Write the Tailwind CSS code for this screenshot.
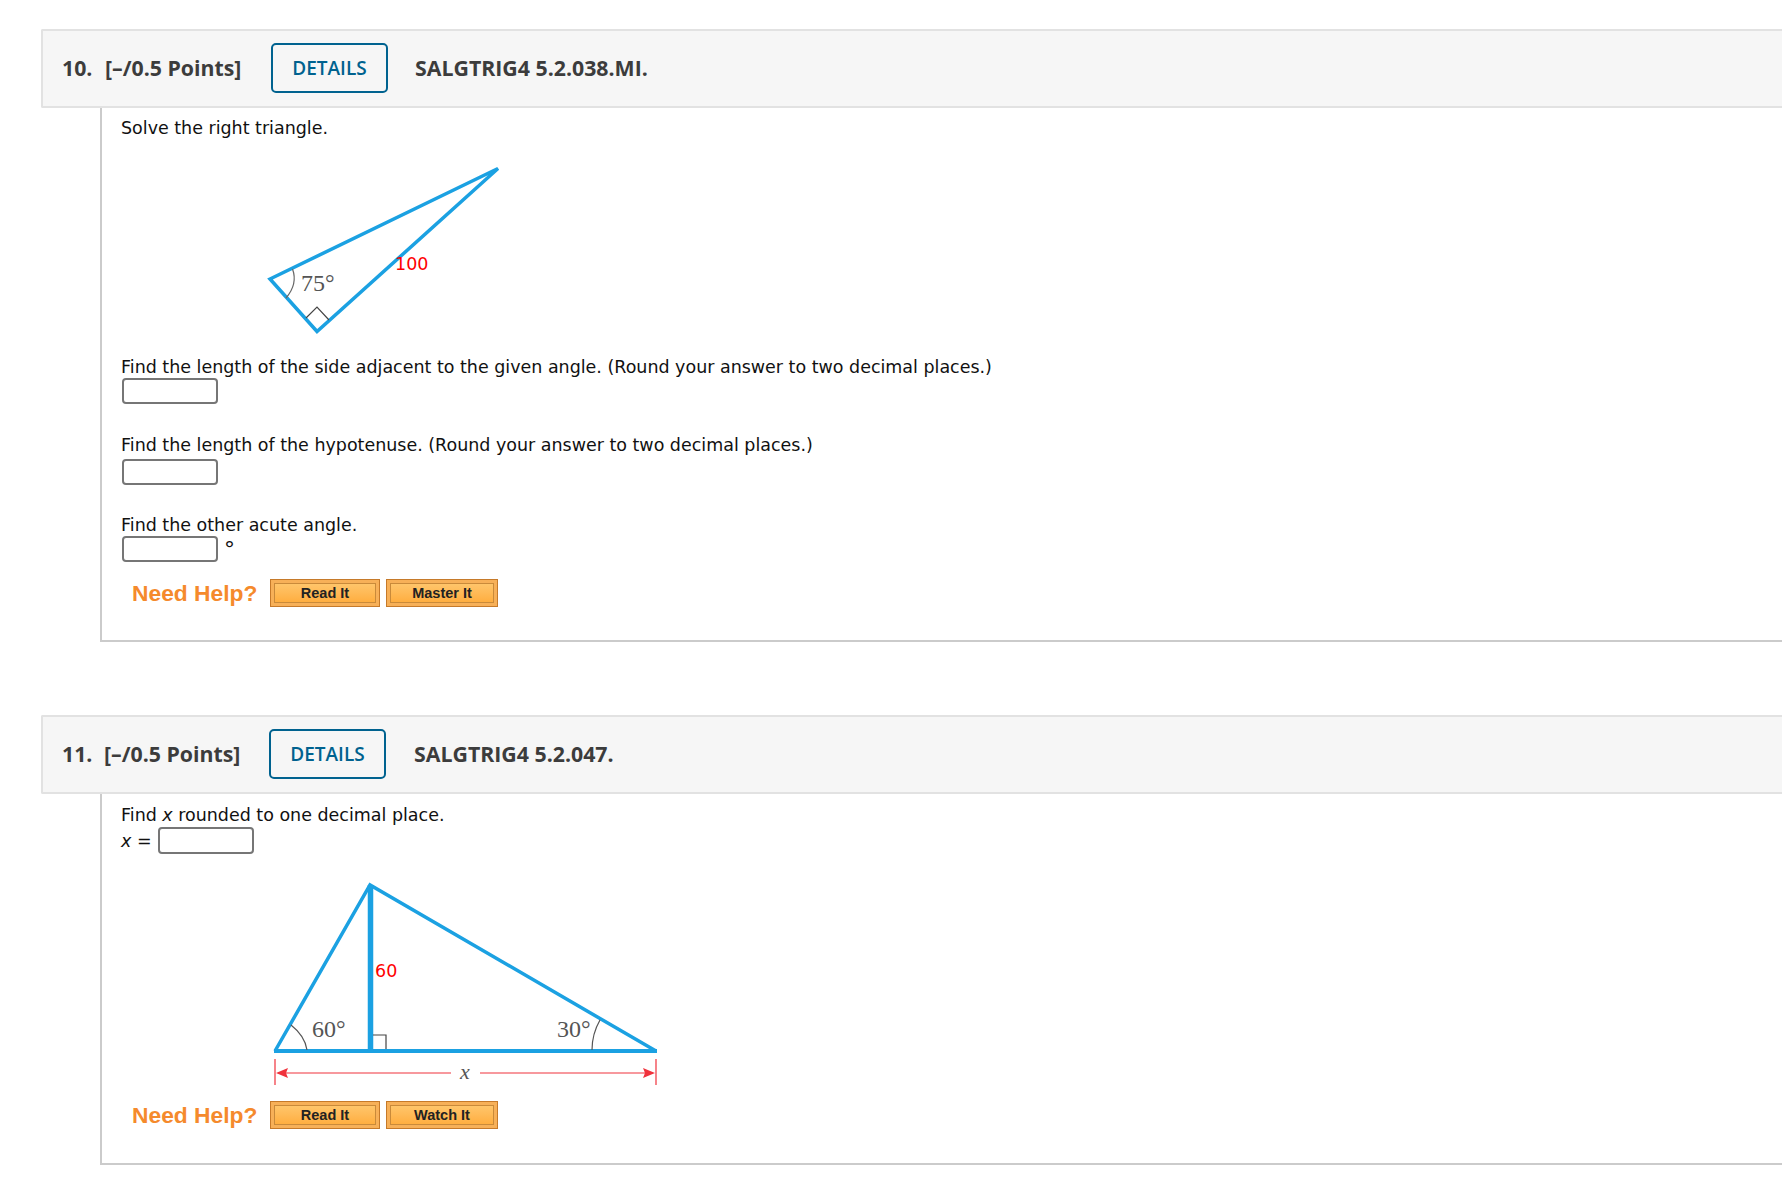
<!DOCTYPE html>
<html lang="en">
<head>
  <meta charset="UTF-8">
  <title>Assignment</title>
  <script src="https://cdn.jsdelivr.net/npm/@tailwindcss/browser@4"></script>
</head>
<body class="bg-white overflow-hidden w-[1782px] h-[1202px] text-[17.48px] leading-[24px] text-[#111] font-['DejaVu_Sans',sans-serif]">

  <!-- question 10 -->
  <section class="pt-[29px]">
    <div class="ml-[41px] h-[79px] flex items-center pl-[19px] pb-[2px] bg-[#f6f6f6] border-2 border-r-0 border-[#e2e2e2] rounded-l-[2px] font-['Open_Sans',sans-serif] font-bold text-[21.3px] text-[#3c3c3c]">
      <span class="w-[25px]">10.</span>
      <span class="ml-[18px] w-[165px]">[–/0.5 Points]</span>
      <a class="ml-[1px] w-[117px] h-[50px] flex items-center justify-center border-2 border-[#00628f] rounded-[5px] font-semibold text-[#00628f] text-[19px]">DETAILS</a>
      <span class="ml-[27px]">SALGTRIG4 5.2.038.MI.</span>
    </div>
    <div class="ml-[100px] h-[534px] border-l-2 border-b-2 border-[#cbcbcb] pl-[19px]">
      <p class="pt-[8px] h-[43px]">Solve the right triangle.</p>
      <svg class="ml-[129px] block" width="270" height="200" viewBox="250 150 270 200" fill="none">
        <path d="M270 278 L498 167.500 L317 330.500 Z" stroke="#1ba1e2" stroke-width="3.500" stroke-linejoin="miter"/>
        <path d="M292.500 268 Q298 283 286 297" stroke="#666" stroke-width="1.200"/>
        <path d="M306 317 L317 306 L329 319" stroke="#444" stroke-width="1.200"/>
        <text x="301" y="290" font-family="Liberation Serif" font-size="24" fill="#555">75°</text>
        <text x="395" y="269" font-family="DejaVu Sans" font-size="17.500" fill="#f00">100</text>
      </svg>
      <p class="mt-[4px] h-[24px]">Find the length of the side adjacent to the given angle. (Round your answer to two decimal places.)</p>
      <div class="ml-[1px] mt-[-1px] w-[96px] h-[26px] border-2 border-[#767676] rounded-[4px]"></div>
      <p class="mt-[29px] h-[24px]">Find the length of the hypotenuse. (Round your answer to two decimal places.)</p>
      <div class="ml-[1px] mt-[2px] w-[96px] h-[26px] border-2 border-[#767676] rounded-[4px]"></div>
      <p class="mt-[28px] h-[24px]">Find the other acute angle.</p>
      <div class="flex items-start mt-[-1px] h-[27px]">
        <div class="ml-[1px] w-[96px] h-[26px] border-2 border-[#767676] rounded-[4px]"></div>
        <span class="ml-[6px] text-[22px] leading-[28px]">°</span>
      </div>
      <div class="mt-[16px] ml-[11px] flex items-center h-[28px] font-['Liberation_Sans',sans-serif]">
        <span class="w-[138px] font-bold text-[22.8px] text-[#f58a2c]">Need Help?</span>
        <a class="w-[110px] h-[28px] p-[3px] border border-[#c67a2a] bg-[#f7b058] block"><span class="flex items-center justify-center h-full border border-[#c98a3a] bg-linear-to-b from-[#ffc56a] to-[#ffae3f] font-bold text-[14.5px] text-[#222]">Read It</span></a>
        <a class="ml-[6px] w-[112px] h-[28px] p-[3px] border border-[#c67a2a] bg-[#f7b058] block"><span class="flex items-center justify-center h-full border border-[#c98a3a] bg-linear-to-b from-[#ffc56a] to-[#ffae3f] font-bold text-[14.5px] text-[#222]">Master It</span></a>
      </div>
    </div>
  </section>

  <!-- question 11 -->
  <section class="pt-[73px]">
    <div class="ml-[41px] h-[79px] flex items-center pl-[19px] pb-[2px] bg-[#f6f6f6] border-2 border-r-0 border-[#e2e2e2] rounded-l-[2px] font-['Open_Sans',sans-serif] font-bold text-[21.3px] text-[#3c3c3c]">
      <span class="w-[25px]">11.</span>
      <span class="ml-[17px] w-[165px]">[–/0.5 Points]</span>
      <a class="ml-[0px] w-[117px] h-[50px] flex items-center justify-center border-2 border-[#00628f] rounded-[5px] font-semibold text-[#00628f] text-[19px]">DETAILS</a>
      <span class="ml-[28px]">SALGTRIG4 5.2.047.</span>
    </div>
    <div class="ml-[100px] h-[371px] border-l-2 border-b-2 border-[#cbcbcb] pl-[19px]">
      <p class="pt-[9px] h-[33px]">Find <i>x</i> rounded to one decimal place.</p>
      <div class="flex items-center h-[27px]">
        <span class="w-[37px]"><i>x</i> =</span>
        <div class="w-[96px] h-[27px] border-2 border-[#767676] rounded-[4px]"></div>
      </div>
      <svg class="ml-[139px] mt-[17px] block" width="410" height="220" viewBox="260 870 410 220" fill="none">
        <path d="M275 1050 L370 884 L656 1050" stroke="#1ba1e2" stroke-width="3.500"/>
        <path d="M274 1050 H657" stroke="#1ba1e2" stroke-width="4"/>
        <path d="M370.500 884 V1050" stroke="#1ba1e2" stroke-width="5.500"/>
        <path d="M373 1034 H386 V1048" stroke="#444" stroke-width="1.200"/>
        <path d="M291 1024 Q305 1035 307 1049" stroke="#555" stroke-width="1.200"/>
        <path d="M600 1019 Q592 1033 592 1049" stroke="#555" stroke-width="1.200"/>
        <text x="312" y="1036" font-family="Liberation Serif" font-size="24" fill="#555">60°</text>
        <text x="557" y="1036" font-family="Liberation Serif" font-size="24" fill="#555">30°</text>
        <text x="375" y="976" font-family="DejaVu Sans" font-size="17.500" fill="#f00">60</text>
        <text x="460" y="1078" font-family="Liberation Serif" font-style="italic" font-size="22" fill="#555">x</text>
        <path d="M275 1058 V1084 M656 1058 V1084" stroke="#f0323c" stroke-width="1.200"/>
        <path d="M278 1072 H451 M480 1072 H653" stroke="#f0323c" stroke-width="1.200"/>
        <path d="M276 1072 L288 1067 L286 1072 L288 1077 Z M655 1072 L643 1067 L645 1072 L643 1077 Z" fill="#f0323c"/>
      </svg>
      <div class="mt-[10px] ml-[11px] flex items-center h-[28px] font-['Liberation_Sans',sans-serif]">
        <span class="w-[138px] font-bold text-[22.8px] text-[#f58a2c]">Need Help?</span>
        <a class="w-[110px] h-[28px] p-[3px] border border-[#c67a2a] bg-[#f7b058] block"><span class="flex items-center justify-center h-full border border-[#c98a3a] bg-linear-to-b from-[#ffc56a] to-[#ffae3f] font-bold text-[14.5px] text-[#222]">Read It</span></a>
        <a class="ml-[6px] w-[112px] h-[28px] p-[3px] border border-[#c67a2a] bg-[#f7b058] block"><span class="flex items-center justify-center h-full border border-[#c98a3a] bg-linear-to-b from-[#ffc56a] to-[#ffae3f] font-bold text-[14.5px] text-[#222]">Watch It</span></a>
      </div>
    </div>
  </section>
</body>
</html>
